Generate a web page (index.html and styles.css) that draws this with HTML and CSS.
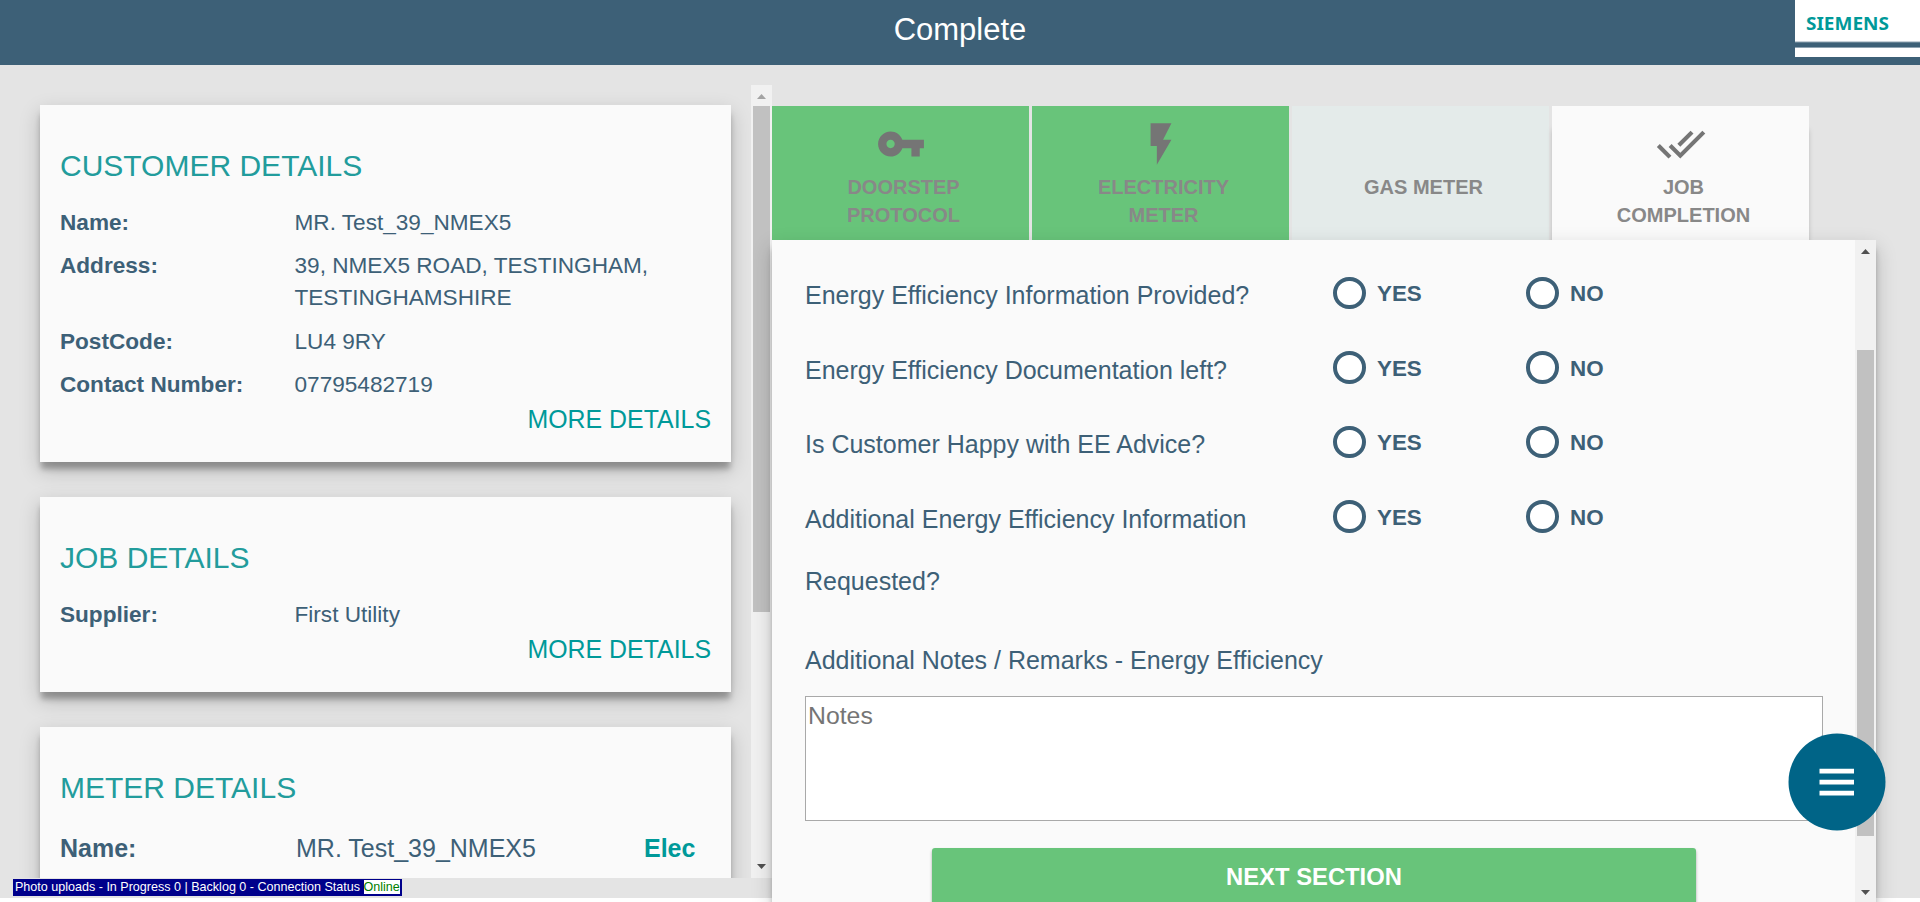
FILE: index.html
```html
<!DOCTYPE html>
<html lang="en">
<head>
<meta charset="utf-8">
<title>Complete</title>
<link rel="stylesheet" href="styles.css">
</head>
<body>
<header class="topbar">
  <h1 class="topbar-title">Complete</h1>
  <svg class="logo" width="125" height="57" viewBox="0 0 125 57">
    <rect width="125" height="57" fill="#fff"/>
    <rect y="41.5" width="125" height="6.5" fill="#8fa3b1"/>
    <rect y="42.5" width="125" height="4.5" fill="#3d6077"/>
    <text class="logo-text" x="11" y="29.5" textLength="83" lengthAdjust="spacingAndGlyphs">SIEMENS</text>
  </svg>
</header>
<div class="page">
  <aside class="side">
    <div class="cards">
      <section class="card">
        <h2 class="card-title">CUSTOMER DETAILS</h2>
        <dl class="facts">
          <dt>Name:</dt><dd>MR. Test_39_NMEX5</dd>
          <dt>Address:</dt><dd>39, NMEX5 ROAD, TESTINGHAM, TESTINGHAMSHIRE</dd>
          <dt>PostCode:</dt><dd>LU4 9RY</dd>
          <dt>Contact Number:</dt><dd>07795482719</dd>
        </dl>
        <a class="more">MORE DETAILS</a>
      </section>
      <section class="card">
        <h2 class="card-title">JOB DETAILS</h2>
        <dl class="facts">
          <dt>Supplier:</dt><dd>First Utility</dd>
        </dl>
        <a class="more">MORE DETAILS</a>
      </section>
      <section class="card card-meter">
        <h2 class="card-title">METER DETAILS</h2>
        <dl class="facts facts-meter">
          <dt>Name:</dt><dd>MR. Test_39_NMEX5</dd><dd class="fuel">Elec</dd>
        </dl>
      </section>
    </div>
    <div class="scroll scroll-side">
      <svg class="arrow" width="9" height="5" viewBox="0 0 9 5"><path d="M0 5L4.5 0L9 5z" fill="#a3a3a3"/></svg>
      <div class="thumb thumb-side"></div>
      <svg class="arrow arrow-down" width="9" height="5" viewBox="0 0 9 5"><path d="M0 0L4.5 5L9 0z" fill="#505050"/></svg>
    </div>
  </aside>
  <main class="main">
    <nav class="tabs">
      <div class="tab tab-done">
        <svg class="tab-icon" viewBox="0 0 24 24"><path d="M12.65 10C11.83 7.67 9.61 6 7 6c-3.31 0-6 2.69-6 6s2.69 6 6 6c2.61 0 4.83-1.67 5.65-4H17v4h4v-4h2v-4H12.65zM7 14c-1.1 0-2-.9-2-2s.9-2 2-2 2 .9 2 2-.9 2-2 2z"/></svg>
        <span class="tab-label">DOORSTEP<br>PROTOCOL</span>
      </div>
      <div class="tab tab-done">
        <svg class="tab-icon" viewBox="0 0 24 24"><path d="M7 2v11h3v9l7-12h-4l4-8z"/></svg>
        <span class="tab-label">ELECTRICITY<br>METER</span>
      </div>
      <div class="tab tab-idle">
        <div class="tab-icon"></div>
        <span class="tab-label">GAS METER</span>
      </div>
      <div class="tab tab-current">
        <svg class="tab-icon" viewBox="0 0 24 24"><path d="M18 7l-1.41-1.41-6.34 6.34 1.41 1.41L18 7zm4.24-1.41L11.66 16.17 7.48 12l-1.41 1.41L11.66 19l12-12-1.42-1.41zM.41 13.41L6 19l1.41-1.41L1.83 12 .41 13.41z"/></svg>
        <span class="tab-label">JOB<br>COMPLETION</span>
      </div>
    </nav>
    <div class="panel">
      <form class="form">
        <div class="question"><span class="q-text">Energy Efficiency Information Provided?</span><span class="option"><i class="ring"></i>YES</span><span class="option"><i class="ring"></i>NO</span></div>
        <div class="question"><span class="q-text">Energy Efficiency Documentation left?</span><span class="option"><i class="ring"></i>YES</span><span class="option"><i class="ring"></i>NO</span></div>
        <div class="question"><span class="q-text">Is Customer Happy with EE Advice?</span><span class="option"><i class="ring"></i>YES</span><span class="option"><i class="ring"></i>NO</span></div>
        <div class="question question-last"><span class="q-text">Additional Energy Efficiency Information Requested?</span><span class="option"><i class="ring"></i>YES</span><span class="option"><i class="ring"></i>NO</span></div>
        <label class="notes-label" for="notes">Additional Notes / Remarks - Energy Efficiency</label>
        <textarea class="notes" id="notes" placeholder="Notes"></textarea>
        <div class="next">NEXT SECTION</div>
      </form>
      <div class="scroll scroll-main">
        <svg class="arrow" width="9" height="5" viewBox="0 0 9 5"><path d="M0 5L4.5 0L9 5z" fill="#505050"/></svg>
        <div class="thumb thumb-main"></div>
        <svg class="arrow arrow-down" width="9" height="5" viewBox="0 0 9 5"><path d="M0 0L4.5 5L9 0z" fill="#505050"/></svg>
      </div>
    </div>
  </main>
</div>
<div class="status">Photo uploads - In Progress 0 | Backlog 0 - Connection Status <span class="online">Online</span></div>
<div class="fab">
  <svg width="98" height="98" viewBox="0 0 98 98"><circle cx="49" cy="49" r="48.5" fill="#006487"/><path d="M31.5 35.7h34.5v4.8H31.5zM31.5 46.7h34.5v4.8H31.5zM31.5 57.7h34.5v4.8H31.5z" fill="#fff"/></svg>
</div>
</body>
</html>
```
FILE: styles.css
```css
* { box-sizing: border-box; }
html { background: #fff; }
body {
  margin: 0;
  height: 902px;
  overflow: hidden;
  font-family: "Liberation Sans", Arial, sans-serif;
  color: #3d6077;
}
h1, h2, dl, dd { margin: 0; font-weight: 400; }

.topbar {
  display: grid;
  grid-template-columns: 125px 1fr 125px;
  height: 65px;
  background: #3d6077;
}
.topbar-title {
  grid-column: 2;
  text-align: center;
  font-size: 31px;
  line-height: 60px;
  color: #fff;
}
.logo { display: block; }
.logo-text {
  font-family: "Noto Sans", sans-serif;
  font-weight: 700;
  font-size: 18.4px;
  fill: #009999;
}

.page {
  display: flex;
  height: 833px;
  background: #e4e4e4;
}
.side {
  display: flex;
  width: 772px;
  height: 813px;
  overflow: hidden;
}
.cards {
  width: 731px;
  padding: 40px 0 0 40px;
  margin-right: 20px;
}
.card {
  margin-bottom: 35px;
  padding: 43px 20px 27px;
  background: #fafafa;
  box-shadow: 0 8px 6px -1px rgba(0,0,0,.28), 0 8px 20px rgba(0,0,0,.2);
}
.card-title {
  font-size: 30px;
  line-height: 36px;
  color: #229c9c;
}
.facts {
  display: grid;
  grid-template-columns: 234.5px 1fr;
  row-gap: 11.3px;
  margin-top: 23px;
  font-size: 22.6px;
  line-height: 32px;
}
.facts dt { font-weight: 700; }
.more {
  display: block;
  margin-top: 2px;
  text-align: right;
  font-size: 24.9px;
  line-height: 32px;
  color: #009999;
}
.card-meter { height: 200px; }
.facts-meter {
  grid-template-columns: 236px 348px 1fr;
  margin-top: 26px;
  font-size: 25px;
}
.facts-meter .fuel { font-weight: 700; color: #009999; }

.scroll {
  display: flex;
  flex-direction: column;
  align-items: center;
  width: 21px;
  background: #f1f1f1;
}
.scroll-side { height: 793px; margin-top: 20px; padding: 9px 0; }
.arrow { display: block; }
.arrow-down { margin-top: auto; }
.thumb { width: 17px; background: #c1c1c1; }
.thumb-side { height: 506px; margin-top: 7px; }

.main { width: 1104px; padding-top: 41px; }
.tabs { display: flex; gap: 3px; }
.tab {
  display: flex;
  flex-direction: column;
  align-items: center;
  width: 257px;
  height: 134px;
  padding-top: 13px;
}
.tab-done { background: #68c47a; }
.tab-idle { background: #e4ebea; }
.tab-current { background: #fafafa; box-shadow: 0 22px 6px -2px rgba(0,0,0,.36); }
.tab-icon { width: 50px; height: 50px; margin-bottom: 4px; fill: #757575; }
.tab-label {
  padding-left: 6px;
  text-align: center;
  font-weight: 700;
  font-size: 20px;
  line-height: 28px;
  color: #888;
}

.panel {
  position: relative;
  display: flex;
  height: 662px;
  background: #fafafa;
  box-shadow: 0 8px 6px -1px rgba(0,0,0,.28), 0 8px 20px rgba(0,0,0,.2);
}
.form {
  display: flex;
  flex-direction: column;
  width: 1083px;
  padding: 24px 32px 0 33px;
  overflow: hidden;
}
.form > * { flex-shrink: 0; }
.question {
  display: grid;
  grid-template-columns: 528px 193px 1fr;
  height: 74.5px;
}
.question-last { height: 141px; }
.q-text { font-size: 25px; line-height: 62px; padding-right: 60px; }
.option {
  display: flex;
  align-items: center;
  gap: 11.5px;
  height: 60px;
  font-weight: 700;
  font-size: 22.4px;
}
.ring {
  width: 32.5px;
  height: 32.5px;
  margin-bottom: 2px;
  border: 4px solid #3d6077;
  border-radius: 50%;
  background: #fff;
}
.notes-label { font-size: 25px; line-height: 62px; }
.notes {
  height: 125px;
  margin: 5px 0 0;
  padding: 5px 2px;
  border: 1px solid #a9a9a9;
  background: #fff;
  resize: none;
  font: 24.8px "Liberation Sans", Arial, sans-serif;
}
.notes::placeholder { color: #757575; }
.next {
  width: 764px;
  height: 60px;
  margin: 27px 0 0 127px;
  border-radius: 3px;
  background: #68c47a;
  box-shadow: 0 2px 3px rgba(0,0,0,.35);
  text-align: center;
  font-weight: 700;
  font-size: 23.8px;
  line-height: 57px;
  color: #fff;
}
.scroll-main { padding: 9px 0 7px; }
.thumb-main { height: 486px; margin-top: 96px; }

.status {
  position: absolute;
  left: 13px;
  top: 879px;
  height: 17px;
  padding: 1px 2px;
  background: #00008b;
  color: #fff;
  font-size: 12.55px;
  line-height: 14px;
  white-space: nowrap;
}
.online { display: inline-block; background: #fff; color: #008000; }
.fab {
  position: absolute;
  left: 1788px;
  top: 733px;
  width: 98px;
  height: 98px;
}
.fab svg { display: block; }
```
